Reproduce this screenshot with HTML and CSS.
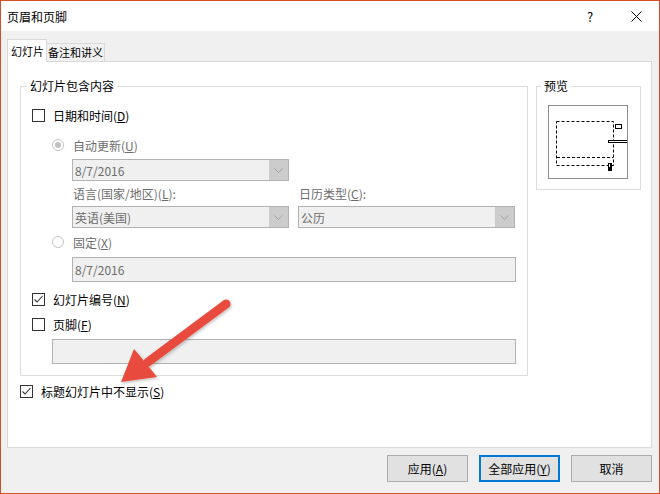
FILE: index.html
```html
<!DOCTYPE html>
<html lang="zh-CN">
<head>
    <meta charset="UTF-8">
    <title>页眉和页脚</title>
    <link rel="stylesheet" href="styles.css">
</head>
<body>
    <div class="window">
        <div class="titlebar">
            <div class="title">页眉和页脚</div>
            <div class="caption-btn">?</div>
            <div class="caption-btn">
                <svg width="11" height="11" viewBox="0 0 11 11"><path d="M0.5 0.5 L10.5 10.5 M10.5 0.5 L0.5 10.5" stroke="#000" stroke-width="1" fill="none"/></svg>
            </div>
        </div>

        <div class="client">
            <div class="tabs">
                <div class="tab active">幻灯片</div>
                <div class="tab">备注和讲义</div>
            </div>

            <div class="panel">
                <div class="groups">
                    <fieldset class="group main-group">
                        <legend>幻灯片包含内容</legend>

                        <div class="row check-row">
                            <span class="checkbox"></span>
                            <span>日期和时间(<u>D</u>)</span>
                        </div>

                        <div class="indent">
                            <div class="row radio-row gap-10 disabled">
                                <span class="radio checked"></span>
                                <span>自动更新(<u>U</u>)</span>
                            </div>
                            <div class="indent">
                                <div class="combo gap-4">
                                    <span class="value">8/7/2016</span>
                                    <span class="drop"><svg width="9" height="5" viewBox="0 0 9 5"><path d="M0.5 0.5 L4.5 4.5 L8.5 0.5" stroke="#a3a3a3" fill="none"/></svg></span>
                                </div>
                                <div class="pair label-row gap-4 disabled">
                                    <span class="half-label">语言(国家/地区)(<u>L</u>):</span>
                                    <span>日历类型(<u>C</u>):</span>
                                </div>
                                <div class="pair gap-5">
                                    <div class="combo">
                                        <span class="value">英语(美国)</span>
                                        <span class="drop"><svg width="9" height="5" viewBox="0 0 9 5"><path d="M0.5 0.5 L4.5 4.5 L8.5 0.5" stroke="#a3a3a3" fill="none"/></svg></span>
                                    </div>
                                    <div class="combo">
                                        <span class="value">公历</span>
                                        <span class="drop"><svg width="9" height="5" viewBox="0 0 9 5"><path d="M0.5 0.5 L4.5 4.5 L8.5 0.5" stroke="#a3a3a3" fill="none"/></svg></span>
                                    </div>
                                </div>
                            </div>
                            <div class="row radio-row gap-4 disabled">
                                <span class="radio"></span>
                                <span>固定(<u>X</u>)</span>
                            </div>
                            <div class="indent">
                                <div class="field gap-5"><span class="value">8/7/2016</span></div>
                            </div>
                        </div>

                        <div class="row check-row gap-7">
                            <span class="checkbox checked">
                                <svg width="11" height="11" viewBox="0 0 11 11"><path d="M1.5 5.5 L4 8 L9.5 2" stroke="#333" stroke-width="1.1" fill="none"/></svg>
                            </span>
                            <span>幻灯片编号(<u>N</u>)</span>
                        </div>
                        <div class="row check-row gap-5">
                            <span class="checkbox"></span>
                            <span>页脚(<u>F</u>)</span>
                        </div>
                        <div class="indent">
                            <div class="field footer-field gap-5"></div>
                        </div>
                    </fieldset>

                    <fieldset class="group preview-group">
                        <legend>预览</legend>
                        <div class="preview">
                            <svg width="78" height="72" viewBox="0 0 78 72">
                                <rect x="7.5" y="15.5" width="57" height="44" fill="none" stroke="#000" stroke-dasharray="3 2"/>
                                <line x1="8" y1="51.5" x2="64" y2="51.5" stroke="#000" stroke-dasharray="3 2"/>
                                <rect x="66.5" y="18.5" width="6" height="4" fill="#fff" stroke="#000"/>
                                <rect x="59.5" y="34.5" width="19" height="2" fill="#fff" stroke="#000"/>
                                <rect x="59" y="57" width="4" height="8" fill="#000"/>
                                <rect x="60" y="58" width="1" height="3" fill="#fff"/>
                            </svg>
                        </div>
                    </fieldset>
                </div>

                <div class="row check-row bottom-check">
                    <span class="checkbox checked">
                        <svg width="11" height="11" viewBox="0 0 11 11"><path d="M1.5 5.5 L4 8 L9.5 2" stroke="#333" stroke-width="1.1" fill="none"/></svg>
                    </span>
                    <span>标题幻灯片中不显示(<u>S</u>)</span>
                </div>
            </div>

            <div class="buttons">
                <div class="btn">应用(<u>A</u>)</div>
                <div class="btn default">全部应用(<u>Y</u>)</div>
                <div class="btn">取消</div>
            </div>
        </div>

        <!-- annotation arrow drawn over the dialog -->
        <svg class="arrow" width="660" height="494" viewBox="0 0 660 494">
            <defs>
                <filter id="shadow" x="-20%" y="-20%" width="140%" height="140%">
                    <feDropShadow dx="1" dy="1.5" stdDeviation="1.5" flood-color="#000" flood-opacity="0.25"/>
                </filter>
            </defs>
            <g filter="url(#shadow)" fill="#e84c3d" stroke="none">
                <line x1="226" y1="304" x2="148" y2="362" stroke="#e84c3d" stroke-width="9" stroke-linecap="round"/>
                <polygon points="121,382 134,349 145,362 157,377"/>
            </g>
        </svg>
    </div>
</body>
</html>
```

FILE: styles.css
```css
body {
    margin: 0;
    font-family: "Noto Sans CJK SC", "Liberation Sans", sans-serif;
    font-size: 12px;
    color: #000;
}

.window {
    position: relative;
    width: 660px;
    height: 494px;
    box-sizing: border-box;
    border: 1px solid #d24f2a;
    background: #f0f0f0;
    display: flex;
    flex-direction: column;
}

.titlebar {
    height: 30px;
    background: #fff;
    display: flex;
    align-items: center;
}

.title {
    flex: 1;
    padding-left: 6px;
}

.caption-btn {
    width: 46px;
    height: 30px;
    display: flex;
    align-items: center;
    justify-content: center;
    font-size: 13px;
}

.client {
    flex: 1;
    padding: 8px 7px 0 6px;
}

.tabs {
    height: 22px;
    display: flex;
    align-items: flex-end;
    font-size: 11px;
}

.tab {
    height: 17px;
    line-height: 17px;
    padding: 0 1px;
    border: 1px solid #d9d9d9;
    border-bottom: none;
    border-left: none;
    background: #f0f0f0;
    white-space: nowrap;
}

.tab.active {
    height: 22px;
    line-height: 22px;
    padding: 0 2px 0 3px;
    border-left: 1px solid #d9d9d9;
    background: #fff;
    position: relative;
    margin-bottom: -1px;
    z-index: 1;
}

.panel {
    height: 385px;
    background: #fff;
    border: 1px solid #d9d9d9;
}

.groups {
    display: flex;
    gap: 8px;
    margin: 16px 0 0 12px;
    align-items: flex-start;
}

.group {
    margin: 0;
    border: 1px solid #dcdcdc;
    box-sizing: border-box;
}

.group legend {
    line-height: 16px;
    padding: 0 3px;
}

.main-group {
    width: 508px;
    padding: 11px;
}

.main-group legend {
    margin-left: -5px;
}

.preview-group {
    width: 105px;
    padding: 11px 0 10px 11px;
}

.preview-group legend {
    margin-left: -7px;
}

.preview {
    width: 78px;
    height: 72px;
    border: 1px solid #8c8c8c;
}

.preview svg {
    display: block;
}

.row {
    height: 20px;
    display: flex;
    align-items: center;
}

.check-row {
    gap: 8px;
}

.radio-row {
    gap: 9px;
}

.disabled {
    color: #6d6d6d;
}

.indent {
    padding-left: 20px;
}

.gap-4 { margin-top: 4px; }
.gap-5 { margin-top: 5px; }
.gap-7 { margin-top: 7px; }
.gap-10 { margin-top: 10px; }

.checkbox {
    width: 11px;
    height: 11px;
    border: 1px solid #333;
    background: #fff;
    display: flex;
}

.radio {
    width: 10px;
    height: 10px;
    border: 1px solid #c4c4c4;
    border-radius: 50%;
    background: #fff;
    display: flex;
    align-items: center;
    justify-content: center;
}

.radio.checked::after {
    content: "";
    width: 6px;
    height: 6px;
    border-radius: 50%;
    background: #c0c0c0;
}

.combo,
.field {
    box-sizing: border-box;
    border: 1px solid #b2b2b2;
    background: #f0f0f0;
    color: #6d6d6d;
    display: flex;
    align-items: center;
}

.combo {
    width: 217px;
    height: 22px;
}

.field {
    width: 444px;
    height: 25px;
}

.footer-field {
    width: 464px;
}

.value {
    flex: 1;
    padding-left: 2px;
}

.drop {
    width: 19px;
    height: 100%;
    background: #cccccc;
    display: flex;
    align-items: center;
    justify-content: center;
}

.pair {
    display: flex;
    gap: 9px;
}

.label-row {
    height: 16px;
    align-items: center;
    padding-left: 1px;
}

.half-label {
    width: 217px;
}

.bottom-check {
    margin: 5px 0 0 12px;
}

.buttons {
    display: flex;
    justify-content: flex-end;
    gap: 11px;
    margin-top: 7px;
}

.btn {
    width: 81px;
    height: 27px;
    box-sizing: border-box;
    border: 1px solid #adadad;
    background: #e1e1e1;
    display: flex;
    align-items: center;
    justify-content: center;
}

.btn.default {
    border: 2px solid #0078d7;
}

.arrow {
    position: absolute;
    left: -1px;
    top: -1px;
    pointer-events: none;
}
```
